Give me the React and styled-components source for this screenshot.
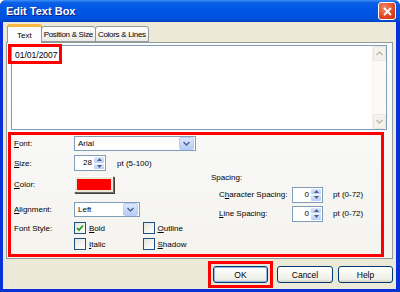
import React from 'react'
import styled, { createGlobalStyle } from 'styled-components'

const GlobalStyle = createGlobalStyle`
  html, body { margin: 0; padding: 0; background: #fff; }
  body { font-family: "Liberation Sans", Arial, sans-serif; font-size: 8px; color: #000; }
`

const Window = styled.div`
  width: 400px;
  height: 292px;
  display: flex;
  flex-direction: column;
  background: #0831d9;
  border-radius: 6px 6px 0 0;
  overflow: hidden;
`

const TitleBar = styled.div`
  height: 22px;
  flex: none;
  display: flex;
  align-items: center;
  padding: 0 4px 0 6px;
  background: linear-gradient(#3d8ff5 0%, #0a5fe6 12%, #0055e5 50%, #0051dc 85%, #0042c0 100%);
`

const Title = styled.span`
  font-family: "Liberation Sans", Arial, sans-serif;
  font-weight: bold;
  font-size: 11px;
  color: #fff;
  text-shadow: 1px 1px 0 #0a1f80;
  flex: 1;
`

const CloseBox = styled.div`
  width: 16px;
  height: 16px;
  border: 1px solid #fff;
  border-radius: 3px;
  background: radial-gradient(circle at 35% 30%, #f08a6c, #e2451f 60%, #c5310c);
  display: flex;
  align-items: center;
  justify-content: center;
`

const Body = styled.div`
  flex: 1;
  display: flex;
  flex-direction: column;
  background: #ece9d8;
  margin: 0 4px 3px 3px;
  padding: 2px 3px 0 3px;
`

const TabRow = styled.div`
  display: flex;
  align-items: flex-end;
  height: 18px;
  padding-left: 1px;
  position: relative;
  z-index: 1;
`

const Tab = styled.div`
  box-sizing: border-box;
  height: ${p => (p.$active ? '19px' : '16px')};
  margin-bottom: ${p => (p.$active ? '-1px' : '0')};
  padding: 0 ${p => (p.$active ? '9px' : '2px')};
  display: flex;
  align-items: center;
  border: 1px solid #919b9c;
  border-bottom: ${p => (p.$active ? 'none' : '1px solid #919b9c')};
  border-top: ${p => (p.$active ? '3px solid #f7b743' : '1px solid #919b9c')};
  border-radius: 3px 3px 0 0;
  background: ${p => (p.$active ? '#fcfcfe' : 'linear-gradient(#fff, #ecebe5)')};
  margin-right: -1px;
  font-size: 8px;
  letter-spacing: ${p => (p.$active ? '0' : '-0.3px')};
  white-space: nowrap;
`

const Panel = styled.div`
  height: 217px;
  box-sizing: border-box;
  border: 1px solid #919b9c;
  background: linear-gradient(#fcfcfe, #f4f3ee);
  padding: 2px 5px 0 4px;
  display: flex;
  flex-direction: column;
`

const TextBox = styled.div`
  position: relative;
  height: 85px;
  box-sizing: border-box;
  border: 1px solid #7f9db9;
  background: #fff;
  display: flex;
`

const TextContent = styled.div`
  flex: 1;
  padding: 4px 3px;
  font-size: 8.5px;
`

const DateMark = styled.div`
  position: absolute;
  left: -4px;
  top: -2px;
  width: 54px;
  height: 20px;
  box-sizing: border-box;
  border: 3px solid #f00;
`

const ScrollBar = styled.div`
  width: 13px;
  display: flex;
  flex-direction: column;
  justify-content: space-between;
  background: #fbfaf7;
  border-left: 1px solid #f3f1ea;
`

const ScrollArrow = styled.div`
  height: 13px;
  border: 1px solid #e9e7df;
  border-radius: 2px;
  background: #f3f2ed;
  display: flex;
  align-items: center;
  justify-content: center;
`

const Highlight = styled.div`
  box-sizing: border-box;
  border: 3px solid #f00;
  height: 125px;
  margin: 2px 3px 0 -3px;
  display: flex;
  padding: 1px 0 0 3px;
`

const LeftCol = styled.div`
  width: 197px;
  display: flex;
  flex-direction: column;
`

const RightCol = styled.div`
  flex: 1;
  display: flex;
  flex-direction: column;
  padding-top: 36px;
`

const Row = styled.div`
  display: flex;
  align-items: center;
  height: ${p => p.$h || 15}px;
  margin-top: ${p => p.$mt || 0}px;
`

const Label = styled.span`
  width: ${p => p.$w || 60}px;
  flex: none;
  white-space: nowrap;
  padding-left: ${p => p.$indent || 0}px;
  box-sizing: border-box;
`

const Hint = styled.span`
  margin-left: ${p => p.$ml || 10}px;
  white-space: nowrap;
`

const Select = styled.div`
  width: ${p => p.$w}px;
  height: 15px;
  box-sizing: border-box;
  border: 1px solid #7f9db9;
  background: #fff;
  display: flex;
  align-items: center;
  padding-left: 3px;
  padding-right: 1px;
`

const SelectValue = styled.span`
  flex: 1;
`

const DropButton = styled.div`
  width: 13px;
  height: 11px;
  border-radius: 2px;
  border: 1px solid #b9cdf5;
  background: linear-gradient(#dde8fe, #b6cbf8);
  display: flex;
  align-items: center;
  justify-content: center;
`

const Spinner = styled.div`
  width: ${p => p.$w}px;
  height: 16px;
  box-sizing: border-box;
  border: 1px solid #7f9db9;
  background: #fff;
  display: flex;
  align-items: stretch;
  padding: 1px;
`

const SpinValue = styled.span`
  flex: 1;
  text-align: right;
  padding-right: 2px;
  line-height: 12px;
`

const SpinButtons = styled.div`
  width: 10px;
  display: flex;
  flex-direction: column;
  gap: 1px;
`

const SpinHalf = styled.div`
  flex: 1;
  border-radius: 1px;
  background: linear-gradient(#dde8fe, #b6cbf8);
  display: flex;
  align-items: center;
  justify-content: center;
`

const ColorButton = styled.div`
  width: 40px;
  height: 17px;
  box-sizing: border-box;
  border: 1px solid #fff;
  border-right-color: #716f64;
  border-bottom-color: #716f64;
  box-shadow: 1px 1px 0 #404040;
  background: #ece9d8;
  padding: 2px;
  display: flex;
`

const Swatch = styled.div`
  flex: 1;
  background: #f00;
`

const CheckItem = styled.div`
  display: flex;
  align-items: center;
  width: ${p => p.$w || 69}px;
  gap: 3px;
`

const CheckBox = styled.div`
  width: 12px;
  height: 12px;
  box-sizing: border-box;
  border: 1px solid #1c5180;
  background: linear-gradient(135deg, #e6e6e0, #fff);
  display: flex;
  align-items: center;
  justify-content: center;
`

const U = styled.span`
  text-decoration: underline;
`

const ButtonRow = styled.div`
  display: flex;
  justify-content: flex-end;
  align-items: center;
  margin-top: 2px;
  gap: 5px;
`

const FocusMark = styled.div`
  border: 3px solid #f00;
  padding: 2px;
  margin-right: -1px;
`

const Button = styled.div`
  width: ${p => p.$w || 55}px;
  height: 17px;
  box-sizing: border-box;
  border: 1px solid #003c74;
  border-radius: 3px;
  background: linear-gradient(#fff, #f0f0ea 80%, #d6d0c5);
  box-shadow: ${p => (p.$focus ? 'inset 0 0 0 1px #97b8ec' : 'none')};
  display: flex;
  align-items: center;
  justify-content: center;
  font-size: 8.5px;
`

const Chevron = ({ up, color = '#4d6185' }) => (
  <svg width="7" height="5" viewBox="0 0 7 5">
    <path d={up ? 'M0.5 4 L3.5 1 L6.5 4' : 'M0.5 1 L3.5 4 L6.5 1'} fill="none" stroke={color} strokeWidth="1.4" />
  </svg>
)

const SpinArrow = ({ up }) => (
  <svg width="5" height="3" viewBox="0 0 5 3">
    <path d={up ? 'M0 3 L2.5 0 L5 3 Z' : 'M0 0 L2.5 3 L5 0 Z'} fill="#4d6185" />
  </svg>
)

const Check = ({ on, label, w }) => (
  <CheckItem $w={w}>
    <CheckBox>
      {on && (
        <svg width="8" height="8" viewBox="0 0 8 8">
          <path d="M1 4 L3 6.2 L7 1.5" fill="none" stroke="#21a121" strokeWidth="1.8" />
        </svg>
      )}
    </CheckBox>
    <span><U>{label[0]}</U>{label.slice(1)}</span>
  </CheckItem>
)

const App = () => (
  <>
    <GlobalStyle />
    <Window>
      <TitleBar>
        <Title>Edit Text Box</Title>
        <CloseBox>
          <svg width="9" height="9" viewBox="0 0 9 9">
            <path d="M1 1 L8 8 M8 1 L1 8" stroke="#fff" strokeWidth="1.8" />
          </svg>
        </CloseBox>
      </TitleBar>
      <Body>
        <TabRow>
          <Tab $active>Text</Tab>
          <Tab>Position &amp; Size</Tab>
          <Tab>Colors &amp; Lines</Tab>
        </TabRow>
        <Panel>
          <TextBox>
            <TextContent>01/01/2007</TextContent>
            <DateMark />
            <ScrollBar>
              <ScrollArrow><Chevron up color="#b8b6ad" /></ScrollArrow>
              <ScrollArrow><Chevron color="#b8b6ad" /></ScrollArrow>
            </ScrollBar>
          </TextBox>
          <Highlight>
            <LeftCol>
              <Row>
                <Label><U>F</U>ont:</Label>
                <Select $w={122}>
                  <SelectValue>Arial</SelectValue>
                  <DropButton><Chevron /></DropButton>
                </Select>
              </Row>
              <Row $mt={4} $h={16}>
                <Label><U>S</U>ize:</Label>
                <Spinner $w={32}>
                  <SpinValue>28</SpinValue>
                  <SpinButtons>
                    <SpinHalf><SpinArrow up /></SpinHalf>
                    <SpinHalf><SpinArrow /></SpinHalf>
                  </SpinButtons>
                </Spinner>
                <Hint $ml={11}>pt (5-100)</Hint>
              </Row>
              <Row $mt={5} $h={17}>
                <Label><U>C</U>olor:</Label>
                <ColorButton><Swatch /></ColorButton>
              </Row>
              <Row $mt={9}>
                <Label><U>A</U>lignment:</Label>
                <Select $w={66}>
                  <SelectValue>Left</SelectValue>
                  <DropButton><Chevron /></DropButton>
                </Select>
              </Row>
              <Row $mt={4} $h={14}>
                <Label>Font Style:</Label>
                <Check on label="Bold" />
                <Check label="Outline" />
              </Row>
              <Row $mt={2} $h={14}>
                <Label />
                <Check label="Italic" />
                <Check label="Shadow" />
              </Row>
            </LeftCol>
            <RightCol>
              <Row $h={10}>
                <Label $w={80}>Spacing:</Label>
              </Row>
              <Row $mt={5} $h={15}>
                <Label $w={81} $indent={8}>C<U>h</U>aracter Spacing:</Label>
                <Spinner $w={31}>
                  <SpinValue>0</SpinValue>
                  <SpinButtons>
                    <SpinHalf><SpinArrow up /></SpinHalf>
                    <SpinHalf><SpinArrow /></SpinHalf>
                  </SpinButtons>
                </Spinner>
                <Hint>pt (0-72)</Hint>
              </Row>
              <Row $mt={4} $h={15}>
                <Label $w={81} $indent={8}><U>L</U>ine Spacing:</Label>
                <Spinner $w={31}>
                  <SpinValue>0</SpinValue>
                  <SpinButtons>
                    <SpinHalf><SpinArrow up /></SpinHalf>
                    <SpinHalf><SpinArrow /></SpinHalf>
                  </SpinButtons>
                </Spinner>
                <Hint>pt (0-72)</Hint>
              </Row>
            </RightCol>
          </Highlight>
        </Panel>
        <ButtonRow>
          <FocusMark>
            <Button $focus $w={55}>OK</Button>
          </FocusMark>
          <Button $w={56}>Cancel</Button>
          <Button $w={55}>Help</Button>
        </ButtonRow>
      </Body>
    </Window>
  </>
)

export default App
